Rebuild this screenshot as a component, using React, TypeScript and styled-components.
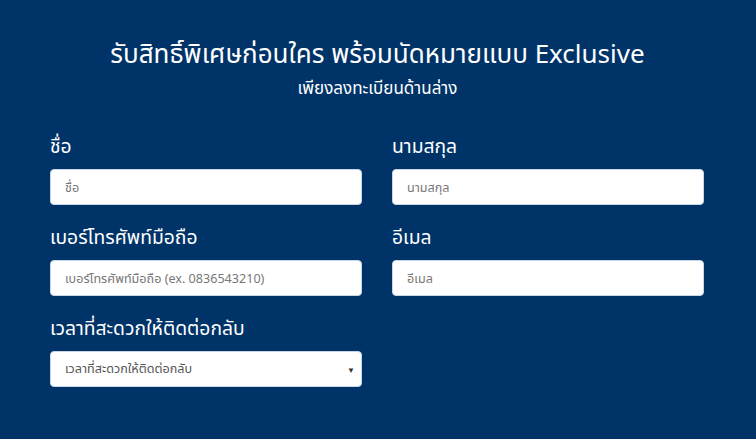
import React from "react";
import styled, { createGlobalStyle } from "styled-components";

const Global = createGlobalStyle`
  html, body { margin: 0; padding: 0; background: #003468; }
  body { font-family: "Noto Sans", "Noto Sans Thai", Roboto, sans-serif; }
  * { box-sizing: border-box; }
`;

const Page = styled.div`
  width: 756px;
  height: 439px;
  background: #003468;
  color: #fff;
  padding: 34px 51px 0 50px;
`;

const Header = styled.div`
  text-align: center;
  margin-bottom: 31px;
`;

const Title = styled.h1`
  margin: 0;
  font-size: 26px;
  font-weight: 400;
  line-height: 38px;
`;

const Subtitle = styled.p`
  margin: 3px 0 0;
  font-size: 17px;
  line-height: 26px;
`;

const Grid = styled.div`
  display: grid;
  grid-template-columns: 312px 312px;
  column-gap: 30px;
  row-gap: 18px;
`;

const Field = styled.div`
  display: flex;
  flex-direction: column;
`;

const Label = styled.label`
  font-size: 19.3px;
  line-height: 28px;
  margin-bottom: 9px;
`;

const Input = styled.input`
  height: 36px;
  width: 100%;
  border: 1px solid #c9d6e6;
  border-radius: 4px;
  background: #fff;
  padding: 0 14px;
  font-family: inherit;
  font-size: 12.6px;
  color: #555;
  &::placeholder { color: #777; }
`;

const SelectWrap = styled.div`
  position: relative;
  height: 36px;
  background: #fff;
  border: 1px solid #c9d6e6;
  border-radius: 4px;
  display: flex;
  align-items: center;
  padding: 0 14px;
  font-size: 12.6px;
  color: #555;
`;

const Arrow = styled.span`
  position: absolute;
  right: 6px;
  top: 50%;
  transform: translateY(-50%);
  font-size: 8px;
  color: #333;
`;

export default function App() {
  return (
    <>
      <Global />
      <Page>
        <Header>
          <Title>รับสิทธิ์พิเศษก่อนใคร พร้อมนัดหมายแบบ Exclusive</Title>
          <Subtitle>เพียงลงทะเบียนด้านล่าง</Subtitle>
        </Header>
        <Grid>
          <Field>
            <Label>ชื่อ</Label>
            <Input placeholder="ชื่อ" />
          </Field>
          <Field>
            <Label>นามสกุล</Label>
            <Input placeholder="นามสกุล" />
          </Field>
          <Field>
            <Label>เบอร์โทรศัพท์มือถือ</Label>
            <Input placeholder="เบอร์โทรศัพท์มือถือ (ex. 0836543210)" />
          </Field>
          <Field>
            <Label>อีเมล</Label>
            <Input placeholder="อีเมล" />
          </Field>
          <Field>
            <Label>เวลาที่สะดวกให้ติดต่อกลับ</Label>
            <SelectWrap>
              เวลาที่สะดวกให้ติดต่อกลับ
              <Arrow>▼</Arrow>
            </SelectWrap>
          </Field>
        </Grid>
      </Page>
    </>
  );
}
